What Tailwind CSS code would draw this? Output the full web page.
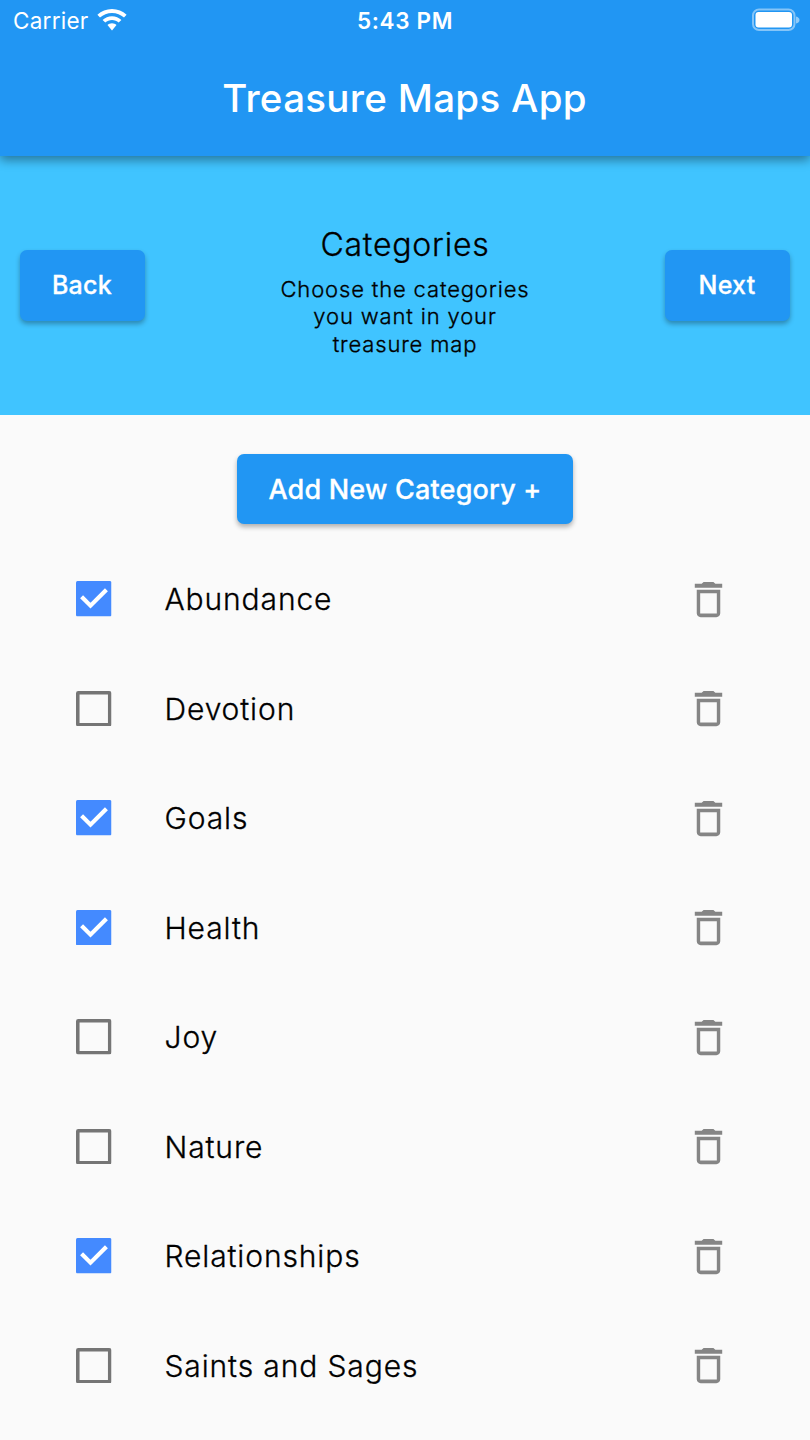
<!DOCTYPE html>
<html lang="en">
<head>
<meta charset="utf-8">
<title>Treasure Maps App</title>
<script src="https://cdn.jsdelivr.net/npm/@tailwindcss/browser@4"></script>
</head>
<body class="w-[810px] h-[1440px] overflow-hidden bg-[#fafafa] font-['Inter',sans-serif] text-black">
<svg class="hidden">
  <symbol id="trash" viewBox="0 0 24 24"><path d="M6 19c0 1.100.9 2 2 2h8c1.100 0 2-.9 2-2V7H6v12zM7.750 8.850h8.500v10.350H7.750V8.850zM15.500 4l-1-1h-5l-1 1H5v2h14V4h-3.500z"/></symbol>
  <symbol id="on" viewBox="0 0 35 35"><rect width="35" height="35" rx="1.500" fill="#448aff"/><path d="M5.500 15.500L14.300 24.300L30 8.600" fill="none" stroke="#fff" stroke-width="4.100"/></symbol>
  <symbol id="off" viewBox="0 0 35 35"><rect x="1.750" y="1.750" width="31.500" height="31.500" rx=".5" fill="none" stroke="#757575" stroke-width="3.500"/></symbol>
</svg>
<header class="relative z-10 h-[156px] bg-[#2196f3] text-white shadow-[0_4px_10px_rgba(0,0,0,0.4)]">
  <div class="flex h-10 items-center justify-between pl-[13px] pr-[10px]">
    <div class="flex flex-1 items-center gap-[8px]"><span class="mt-px text-[22.500px] font-normal tracking-[0.250px]">Carrier</span>
      <svg class="w-[30px] h-[22px] -mt-px" viewBox="0 0 30 22" fill="currentColor"><path d="M15 0C9.400 0 4.300 2.200.4 5.800L3 8.500C6.200 5.600 10.400 3.900 15 3.900S23.800 5.600 27 8.500L29.600 5.800C25.700 2.200 20.600 0 15 0Z"/><path d="M15 7.200C11.400 7.200 8.100 8.600 5.600 10.900L8.300 13.600C10.100 12 12.400 11 15 11S19.900 12 21.700 13.600L24.400 10.900C21.900 8.600 18.600 7.200 15 7.200Z"/><path d="M15 14.200C13.200 14.200 11.600 14.900 10.500 16L15 21.500L19.500 16C18.400 14.900 16.800 14.200 15 14.200Z"/></svg>
    </div>
    <span class="-ml-[3px] mt-px text-[22.500px] font-semibold tracking-[0.650px]">5:43 PM</span>
    <div class="flex flex-1 justify-end"><svg class="w-[48px] h-[24px]" viewBox="0 0 48 24"><rect x="1" y="1.500" width="41.500" height="20.500" rx="6" fill="none" stroke="#fff" stroke-opacity=".45" stroke-width="2"/><rect x="3.500" y="4" width="36.500" height="15.500" rx="3" fill="#fff"/><path d="M44 8.500Q47.500 9.500 47.500 12T44 15.500Z" fill="#fff" fill-opacity=".5"/></svg></div>
  </div>
  <h1 class="flex h-[116px] items-center justify-center pr-px text-[38.500px] leading-none font-medium tracking-[0.300px]">Treasure Maps App</h1>
</header>
<section class="flex h-[259px] items-center justify-between bg-[#40c4ff] px-5">
  <button class="flex h-[71px] w-[125px] items-center justify-center rounded-[7px] bg-[#2196f3] pr-px text-[25px] font-medium tracking-[0.300px] text-white shadow-[0_3px_5px_rgba(0,0,0,0.3)] [-webkit-text-stroke:0.3px]">Back</button>
  <div class="flex flex-col items-center text-center [-webkit-text-stroke:0.3px]">
    <h2 class="h-[63px] pt-[12px] text-[32px] leading-[40px] font-light tracking-[0.780px]">Categories</h2>
    <p class="text-[22px] leading-[27.500px] font-light tracking-[0.850px]">Choose the categories<br>you want in your<br>treasure map</p>
  </div>
  <button class="flex h-[71px] w-[125px] items-center justify-center rounded-[7px] bg-[#2196f3] pr-px text-[25px] font-medium tracking-[0.300px] text-white shadow-[0_3px_5px_rgba(0,0,0,0.3)] [-webkit-text-stroke:0.3px]">Next</button>
</section>
<main class="flex flex-col items-center pt-[39px]">
  <button class="flex h-[70px] w-[336px] items-center justify-center rounded-[7px] bg-[#2196f3] pt-[2px] text-[27px] font-medium tracking-[0.200px] text-white shadow-[0_3px_5px_rgba(0,0,0,0.3)] [-webkit-text-stroke:0.3px]">Add New Category +</button>
  <ul class="mt-[20.400px] w-full text-[30px] font-light tracking-[0.880px]">
    <li class="flex h-[109.500px] items-center pl-[76px] pr-[78px]"><svg class="size-[35.500px]"><use href="#on"/></svg><span class="ml-[53px] flex-1 pt-px [-webkit-text-stroke:0.3px]">Abundance</span><svg class="size-[47px] fill-[#858585]"><use href="#trash"/></svg></li>
    <li class="flex h-[109.500px] items-center pl-[76px] pr-[78px]"><svg class="size-[35.500px]"><use href="#off"/></svg><span class="ml-[53px] flex-1 pt-px [-webkit-text-stroke:0.3px]">Devotion</span><svg class="size-[47px] fill-[#858585]"><use href="#trash"/></svg></li>
    <li class="flex h-[109.500px] items-center pl-[76px] pr-[78px]"><svg class="size-[35.500px]"><use href="#on"/></svg><span class="ml-[53px] flex-1 pt-px [-webkit-text-stroke:0.3px]">Goals</span><svg class="size-[47px] fill-[#858585]"><use href="#trash"/></svg></li>
    <li class="flex h-[109.500px] items-center pl-[76px] pr-[78px]"><svg class="size-[35.500px]"><use href="#on"/></svg><span class="ml-[53px] flex-1 pt-px [-webkit-text-stroke:0.3px]">Health</span><svg class="size-[47px] fill-[#858585]"><use href="#trash"/></svg></li>
    <li class="flex h-[109.500px] items-center pl-[76px] pr-[78px]"><svg class="size-[35.500px]"><use href="#off"/></svg><span class="ml-[53px] flex-1 pt-px [-webkit-text-stroke:0.3px]">Joy</span><svg class="size-[47px] fill-[#858585]"><use href="#trash"/></svg></li>
    <li class="flex h-[109.500px] items-center pl-[76px] pr-[78px]"><svg class="size-[35.500px]"><use href="#off"/></svg><span class="ml-[53px] flex-1 pt-px [-webkit-text-stroke:0.3px]">Nature</span><svg class="size-[47px] fill-[#858585]"><use href="#trash"/></svg></li>
    <li class="flex h-[109.500px] items-center pl-[76px] pr-[78px]"><svg class="size-[35.500px]"><use href="#on"/></svg><span class="ml-[53px] flex-1 pt-px [-webkit-text-stroke:0.3px]">Relationships</span><svg class="size-[47px] fill-[#858585]"><use href="#trash"/></svg></li>
    <li class="flex h-[109.500px] items-center pl-[76px] pr-[78px]"><svg class="size-[35.500px]"><use href="#off"/></svg><span class="ml-[53px] flex-1 pt-px [-webkit-text-stroke:0.3px]">Saints and Sages</span><svg class="size-[47px] fill-[#858585]"><use href="#trash"/></svg></li>
  </ul>
</main>
</body>
</html>
